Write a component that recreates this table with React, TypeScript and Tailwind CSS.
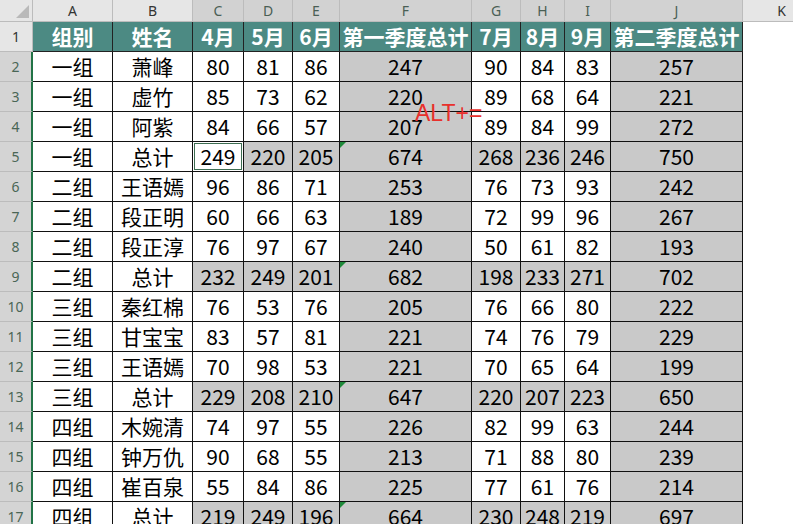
import React from "react";

const colLetters = ["A", "B", "C", "D", "E", "F", "G", "H", "I", "J", "K"];
const selectedCols = new Set(["C", "D", "E", "F", "G", "H", "I", "J"]);
const headers = ["组别", "姓名", "4月", "5月", "6月", "第一季度总计", "7月", "8月", "9月", "第二季度总计"];

const data: (string | number)[][] = [
  ["一组", "萧峰", 80, 81, 86, 247, 90, 84, 83, 257],
  ["一组", "虚竹", 85, 73, 62, 220, 89, 68, 64, 221],
  ["一组", "阿紫", 84, 66, 57, 207, 89, 84, 99, 272],
  ["一组", "总计", 249, 220, 205, 674, 268, 236, 246, 750],
  ["二组", "王语嫣", 96, 86, 71, 253, 76, 73, 93, 242],
  ["二组", "段正明", 60, 66, 63, 189, 72, 99, 96, 267],
  ["二组", "段正淳", 76, 97, 67, 240, 50, 61, 82, 193],
  ["二组", "总计", 232, 249, 201, 682, 198, 233, 271, 702],
  ["三组", "秦红棉", 76, 53, 76, 205, 76, 66, 80, 222],
  ["三组", "甘宝宝", 83, 57, 81, 221, 74, 76, 79, 229],
  ["三组", "王语嫣", 70, 98, 53, 221, 70, 65, 64, 199],
  ["三组", "总计", 229, 208, 210, 647, 220, 207, 223, 650],
  ["四组", "木婉清", 74, 97, 55, 226, 82, 99, 63, 244],
  ["四组", "钟万仇", 90, 68, 55, 213, 71, 88, 80, 239],
  ["四组", "崔百泉", 55, 84, 86, 225, 77, 61, 76, 214],
  ["四组", "总计", 219, 249, 196, 664, 230, 248, 219, 697],
];

const cellFont = { fontFamily: '"Noto Sans CJK SC", "Noto Sans", sans-serif' };
const uiFont = { fontFamily: '"Noto Sans", "Liberation Sans", sans-serif' };

export default function App() {
  return (
    <div className="relative w-[793px] h-[524px] overflow-hidden bg-white">
      <div className="grid grid-cols-[33px_80px_80px_51px_49px_47px_132px_49px_44px_46px_132px_78px] grid-rows-[22px_repeat(17,30px)]">
        {/* corner */}
        <div className="relative bg-[#e6e6e6] border-r border-b border-[#bcbcbc]">
          <svg className="absolute right-[3px] bottom-[3px]" width="13" height="13" viewBox="0 0 13 13">
            <polygon points="13,0 13,13 0,13" fill="#b9b9b9" />
          </svg>
        </div>
        {colLetters.map((c) => (
          <div
            key={c}
            style={uiFont}
            className={`flex items-center justify-center text-[14px] border-r border-b border-[#bcbcbc] ${
              selectedCols.has(c) ? "bg-[#d2d2d2] text-[#4a5f55]" : "bg-[#e6e6e6] text-[#333]"
            }`}
          >
            {c}
          </div>
        ))}

        {/* row 1 */}
        <div style={uiFont} className="flex items-center justify-center text-[14px] bg-[#e6e6e6] text-[#333] border-r border-b border-[#bcbcbc]">
          1
        </div>
        {headers.map((h, i) => (
          <div
            key={i}
            style={cellFont}
            className="flex items-center justify-center bg-[#4c8a83] text-white font-bold text-[21px] border-r border-b border-[#222] whitespace-nowrap"
          >
            {h}
          </div>
        ))}
        <div className="bg-white" />

        {data.map((row, ri) => {
          const isTotal = ri % 4 === 3;
          return (
            <React.Fragment key={ri}>
              <div
                style={uiFont}
                className="flex items-center justify-center text-[14px] bg-[#d4d4d4] text-[#4a6656] border-b border-[#bcbcbc] border-r-2 border-r-[#217346]"
              >
                {ri + 2}
              </div>
              {row.map((v, ci) => {
                const grey = ci === 5 || ci === 9 || (isTotal && ci >= 2);
                const active = ri === 3 && ci === 2;
                const tri = isTotal && ci === 5;
                return (
                  <div
                    key={ci}
                    style={cellFont}
                    className={`relative flex items-center justify-center text-[21px] text-black border-r border-b border-[#111] whitespace-nowrap ${
                      grey && !active ? "bg-[#c9c9c9]" : "bg-white"
                    }`}
                  >
                    {active && <div className="absolute inset-[1px] border border-[#3d6e52]" />}
                    {tri && (
                      <svg className="absolute left-0 top-0" width="6" height="6" viewBox="0 0 6 6">
                        <polygon points="0,0 6,0 0,6" fill="#1f8a3a" />
                      </svg>
                    )}
                    <span className="relative">{v}</span>
                  </div>
                );
              })}
              <div className="bg-white" />
            </React.Fragment>
          );
        })}
      </div>
      <div
        className="absolute left-[415px] top-[102px] text-[23px] leading-none text-[#e8302c]"
        style={{ fontFamily: '"Liberation Sans", Arial, sans-serif' }}
      >
        ALT+=
      </div>
    </div>
  );
}
